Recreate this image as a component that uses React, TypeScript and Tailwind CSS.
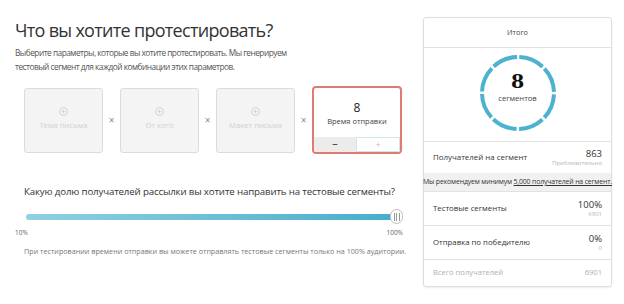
import React from 'react';

const font = { fontFamily: '"Open Sans", "Noto Sans", sans-serif' };

function EmptyCard({ label }: { label: string }) {
  return (
    <div className="flex h-[65px] w-[79px] flex-col items-center justify-center rounded-[3px] border border-[#dcdcdc] bg-[#f4f4f4]">
      <svg width="9" height="9" viewBox="0 0 10 10" className="-mt-[4px]">
        <circle cx="5" cy="5" r="4.3" fill="none" stroke="#d0d0d0" strokeWidth="1" />
        <path d="M5 3v4M3 5h4" stroke="#d0d0d0" strokeWidth="1" />
      </svg>
      <span className="mt-[4px] text-[7.7px] leading-[10px] text-[#d0d0d0]">{label}</span>
    </div>
  );
}

function Times() {
  return <span className="w-[17px] text-center text-[10px] leading-none text-[#8a8a8a]">×</span>;
}

function SegmentRing() {
  const r = 36;
  const c = 2 * Math.PI * r;
  const seg = c / 8;
  const gap = 2.6;
  return (
    <svg width="80" height="80" viewBox="0 0 80 80" className="absolute inset-0">
      <circle
        cx="40"
        cy="40"
        r={r}
        fill="none"
        stroke="#4cb2cd"
        strokeWidth="4"
        strokeDasharray={`${seg - gap} ${gap}`}
        strokeDashoffset={-gap / 2}
        transform="rotate(-90 40 40)"
      />
    </svg>
  );
}

function StatRow({ label, value, sub }: { label: string; value: string; sub: string }) {
  return (
    <div className="flex h-[34px] items-center justify-between border-t border-[#e2e2e2] px-[9px]">
      <span className="text-[7.8px] text-[#333]">{label}</span>
      <div className="flex flex-col items-end leading-none">
        <span className="text-[9.5px] text-[#333]">{value}</span>
        <span className="mt-[1px] text-[6px] text-[#b5b5b5]">{sub}</span>
      </div>
    </div>
  );
}

export default function App() {
  return (
    <div className="flex h-[304px] w-[624px] bg-white" style={font}>
      {/* Left column */}
      <div className="w-[423px] pl-[15px] pt-[18px]">
        <h1 className="text-[18px] leading-[24px] tracking-[-0.7px] text-[#333]">
          Что вы хотите протестировать?
        </h1>
        <p className="mt-[4px] text-[8.3px] leading-[14px] tracking-[-0.5px] text-[#555]">
          Выберите параметры, которые вы хотите протестировать. Мы генерируем
          <br />
          тестовый сегмент для каждой комбинации этих параметров.
        </p>

        <div className="ml-[9px] mt-[12px] flex items-center">
          <EmptyCard label="Тема письма" />
          <Times />
          <EmptyCard label="От кого" />
          <Times />
          <EmptyCard label="Макет письма" />
          <Times />
          <div className="flex h-[68px] w-[90px] flex-col overflow-hidden rounded-[4px] border-2 border-[#e27a74] bg-white">
            <div className="flex flex-1 flex-col items-center justify-center pt-[3px]">
              <span className="text-[12px] leading-[14px] text-[#222]">8</span>
              <span className="text-[7.5px] leading-[12px] text-[#444]">Время отправки</span>
            </div>
            <div className="flex h-[15px]">
              <div className="flex flex-1 items-center justify-center bg-[#edecea] text-[10px] font-semibold text-[#444]">
                −
              </div>
              <div className="flex flex-1 items-center justify-center border border-[#cfe5ea] bg-white text-[9px] text-[#c4c4c4]">
                +
              </div>
            </div>
          </div>
        </div>

        <p className="ml-[9px] mt-[31px] text-[9.7px] leading-[14px] tracking-[-0.15px] text-[#333]">
          Какую долю получателей рассылки вы хотите направить на тестовые сегменты?
        </p>

        {/* Slider */}
        <div className="ml-[11px] mt-[10px] flex w-[377px] items-center">
          <div className="h-[6px] flex-1 rounded-full bg-gradient-to-r from-[#8fd0e2] to-[#45aecb]" />
          <div className="-ml-[6px] flex h-[15px] w-[13px] items-center justify-center gap-[1.5px] rounded-full border border-[#bdbdbd] bg-white">
            <span className="h-[8px] w-[1px] bg-[#999]" />
            <span className="h-[8px] w-[1px] bg-[#999]" />
            <span className="h-[8px] w-[1px] bg-[#999]" />
          </div>
        </div>
        <div className="mt-[4px] flex w-[388px] justify-between text-[6.5px] leading-[9px] text-[#666]">
          <span>10%</span>
          <span>100%</span>
        </div>

        <p className="ml-[9px] mt-[9px] text-[7.2px] leading-[10px] text-[#777]">
          При тестировании времени отправки вы можете отправлять тестовые сегменты только на 100% аудитории.
        </p>
      </div>

      {/* Summary panel */}
      <div className="mt-[17px] flex h-[270px] w-[189px] flex-col rounded-[3px] border border-[#dedede] shadow-[0_1px_2px_rgba(0,0,0,0.08)]">
        <div className="flex h-[29px] items-center justify-center text-[7.3px] text-[#444]">Итого</div>
        <div className="flex h-[94px] items-center justify-center border-t border-[#e2e2e2] pb-[3px]">
          <div className="relative flex h-[80px] w-[80px] flex-col items-center justify-center pb-[10px]">
            <SegmentRing />
            <span
              className="text-[19px] font-bold leading-[20px] text-[#111]"
              style={{ fontFamily: '"DejaVu Serif", serif' }}
            >
              8
            </span>
            <span className="mt-[2px] text-[7.6px] text-[#444]">сегментов</span>
          </div>
        </div>
        <div className="flex h-[32px] items-center justify-between border-t border-[#e2e2e2] px-[9px]">
          <span className="text-[7.9px] text-[#333]">Получателей на сегмент</span>
          <div className="flex flex-col items-end leading-none">
            <span className="text-[9.5px] text-[#333]">863</span>
            <span className="mt-[1px] text-[6px] text-[#b5b5b5]">Приблизительно</span>
          </div>
        </div>
        <div className="flex h-[18px] items-center justify-center whitespace-nowrap bg-[#f1f1f1] text-[6.9px] tracking-[-0.15px] text-[#333]">
          Мы рекомендуем минимум&nbsp;<span className="underline">5,000 получателей на сегмент.</span>
        </div>
        <StatRow label="Тестовые сегменты" value="100%" sub="6901" />
        <StatRow label="Отправка по победителю" value="0%" sub="0" />
        <div className="flex flex-1 items-center justify-between border-t border-[#e2e2e2] px-[9px] text-[7.6px] text-[#b0b0b0]">
          <span>Всего получателей</span>
          <span>6901</span>
        </div>
      </div>
    </div>
  );
}
